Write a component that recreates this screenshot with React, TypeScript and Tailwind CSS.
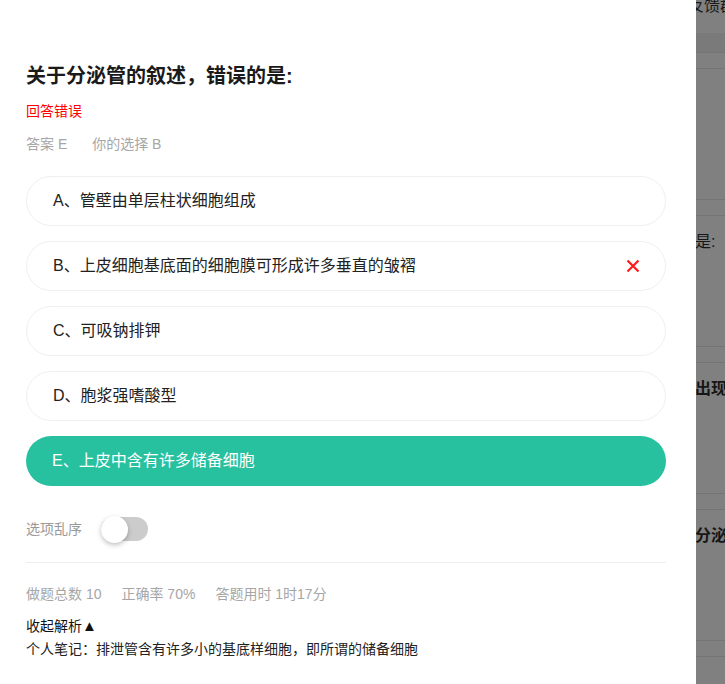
const options = [
  { key: "A", text: "管壁由单层柱状细胞组成" },
  { key: "B", text: "上皮细胞基底面的细胞膜可形成许多垂直的皱褶", wrong: true },
  { key: "C", text: "可吸钠排钾" },
  { key: "D", text: "胞浆强嗜酸型" },
  { key: "E", text: "上皮中含有许多储备细胞", correct: true },
];

const font = "font-['Liberation_Sans','Noto_Sans_CJK_SC',sans-serif]";

function WrongMark() {
  return (
    <svg width="14" height="14" viewBox="0 0 14 14" className="shrink-0">
      <path d="M1.5 1.5 L12.5 12.5 M12.5 1.5 L1.5 12.5" stroke="#ff1a1a" strokeWidth="2.2" />
    </svg>
  );
}

function StripBlock({ label, bold }: { label?: string; bold?: boolean }) {
  return (
    <>
      <div className="h-[17px] border-y border-[#747474]" />
      <div className="h-[130px] pt-[16px]">
        {label && (
          <div
            className={`-ml-[1px] whitespace-nowrap text-[16px] leading-[20px] text-[#161616] ${
              bold ? "font-bold" : ""
            }`}
          >
            {label}
          </div>
        )}
      </div>
    </>
  );
}

export default function App() {
  return (
    <div className={`flex h-[684px] w-[725px] overflow-hidden bg-white ${font}`}>
      <div className="w-[696px] shrink-0 bg-white pl-[26px] pr-[30px] pt-[62px]">
        <h1 className="text-[20px] font-bold leading-[28px] text-[#1a1a1a]">
          关于分泌管的叙述，错误的是:
        </h1>
        <p className="mt-[11px] text-[14px] leading-[20px] text-[#ff0000]">回答错误</p>
        <div className="mt-[13px] flex gap-[25px] text-[14px] leading-[20px] text-[#a6a6a6]">
          <span>答案 E</span>
          <span>你的选择 B</span>
        </div>

        <div className="mt-[22px] flex flex-col gap-[15px]">
          {options.map((o) => (
            <div
              key={o.key}
              className={`flex h-[50px] items-center justify-between rounded-full pl-[26px] pr-[25px] text-[16px] ${
                o.correct
                  ? "bg-[#28c1a0] text-white"
                  : "border border-[#efefef] bg-white text-[#222]"
              }`}
            >
              <span>
                {o.key}、{o.text}
              </span>
              {o.wrong && <WrongMark />}
            </div>
          ))}
        </div>

        <div className="mt-[30px] flex h-[26px] items-center gap-[19px]">
          <span className="text-[14px] text-[#999]">选项乱序</span>
          <div className="relative h-[24px] w-[47px] rounded-full bg-[#cccccc]">
            <div className="absolute -top-[1px] left-0 h-[27px] w-[27px] rounded-full bg-white shadow-[0_2px_5px_rgba(0,0,0,0.25)]" />
          </div>
        </div>

        <div className="mt-[20px] border-t border-[#eeeeee]" />

        <div className="mt-[21px] flex gap-[20px] text-[14px] leading-[20px] text-[#a6a6a6]">
          <span>做题总数 10</span>
          <span>正确率 70%</span>
          <span>答题用时 1时17分</span>
        </div>

        <p className="mt-[12px] text-[14px] leading-[20px] text-[#111]">
          收起解析<span className="text-[15px]">▲</span>
        </p>
        <p className="mt-[3px] text-[14px] leading-[20px] text-[#222]">
          个人笔记：排泄管含有许多小的基底样细胞，即所谓的储备细胞
        </p>
      </div>

      <div className="flex-1 overflow-hidden bg-[#808080]">
        <div className="h-[33px] overflow-hidden">
          <div className="-ml-[8px] -mt-[4px] whitespace-nowrap text-[16px] leading-[20px] text-[#1a1a1a]">
            反馈群
          </div>
        </div>
        <div className="h-[19px] bg-[#7a7a7a]" />
        <StripBlock />
        <StripBlock label="是:" />
        <StripBlock label="出现导" bold />
        <StripBlock label="分泌管" bold />
        <div className="h-[17px] border-y border-[#747474]" />
      </div>
    </div>
  );
}
